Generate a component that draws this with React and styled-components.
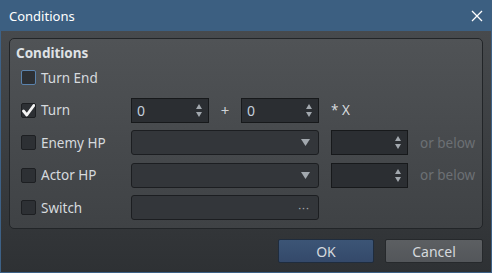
import React from 'react';
import styled, {createGlobalStyle} from 'styled-components';

const Global = createGlobalStyle`
  html, body { margin: 0; padding: 0; background: #2e3134; }
  * { box-sizing: border-box; }
`;

const Window = styled.div`
  width: 492px;
  height: 273px;
  display: flex;
  flex-direction: column;
  border: 1px solid #3d6186;
  border-top: none;
  font-family: "Noto Sans", "Open Sans", sans-serif;
  font-size: 13.5px;
  color: #d6dade;
  background: linear-gradient(#4a4d50, #2e3134);
`;

const TitleBar = styled.div`
  height: 31px;
  margin: 0 -1px;
  background: #3c5f81;
  display: flex;
  align-items: center;
  justify-content: space-between;
  padding: 0 9px 0 9px;
  color: #ffffff;
  font-size: 13px;
`;

const Body = styled.div`
  flex: 1;
  display: flex;
  flex-direction: column;
  padding: 7px 8px 9px 8px;
`;

const Group = styled.div`
  border: 1px solid #222528;
  border-radius: 5px;
  background: linear-gradient(#505356, #3f4245);
  padding: 3px 0 8px 11px;
  height: 191px;
`;

const GroupTitle = styled.div`
  font-weight: bold;
  font-size: 13.5px;
  color: #dfe2e5;
  margin-left: -5px;
  height: 23px;
  line-height: 22px;
`;

const Grid = styled.div`
  display: grid;
  grid-template-columns: 110px 78px 32px 78px 12px 77px auto;
  grid-auto-rows: 25px;
  row-gap: 7.5px;
  align-items: center;
`;

const CheckCell = styled.label`
  display: flex;
  align-items: center;
  gap: 5px;
  grid-column: 1;
`;

const Box = styled.span`
  width: 15px;
  height: 15px;
  border-radius: 2px;
  background: #2d3034;
  border: 1px solid ${p => (p.$focus ? '#5b83ad' : '#1d1f22')};
  display: flex;
  align-items: center;
  justify-content: center;
`;

const Spin = styled.div`
  grid-column: ${p => p.$col};
  height: 25px;
  background: #2b2e32;
  border: 1px solid #17191b;
  display: flex;
  align-items: center;
  justify-content: space-between;
  padding: 0 6px 0 5px;
  color: #c3cfdb;
  font-size: 14px;
`;

const Arrows = styled.div`
  display: flex;
  flex-direction: column;
  gap: 3px;
  align-items: center;
`;

const Combo = styled.div`
  grid-column: 2 / span 3;
  height: 25px;
  background: #33363a;
  border: 1px solid #1c1e21;
  border-radius: 3px;
  display: flex;
  align-items: center;
  justify-content: flex-end;
  padding-right: 8px;
  color: #a9adb2;
`;

const Plus = styled.span`
  grid-column: 3;
  text-align: center;
  font-size: 15px;
  color: #cfd3d7;
`;

const Note = styled.span`
  grid-column: ${p => p.$col};
  padding-left: ${p => p.$pad || 0}px;
  color: ${p => (p.$dim ? '#6c7074' : '#d6dade')};
  white-space: nowrap;
`;

const Footer = styled.div`
  display: flex;
  justify-content: flex-end;
  gap: 11px;
  margin-top: 10px;
`;

const Button = styled.button`
  width: ${p => p.$w}px;
  height: 24px;
  font-family: inherit;
  font-size: 14px;
  border-radius: 2px;
  border: 1px solid ${p => (p.$primary ? '#1f2c3d' : '#26292c')};
  background: ${p => (p.$primary ? 'linear-gradient(#3c5576, #34496a)' : 'linear-gradient(#5c5f62, #53565a)')};
  color: #d5d9dd;
  padding: 0;
`;

const Tri = ({up}) => (
  <svg width="6" height="5" viewBox="0 0 6 5">
    <polygon points={up ? '3,0 6,5 0,5' : '0,0 6,0 3,5'} fill="#a2a8ae" />
  </svg>
);

const SpinArrows = () => (
  <Arrows>
    <Tri up />
    <Tri />
  </Arrows>
);

const Check = ({checked, focus, label}) => (
  <CheckCell>
    <Box $focus={focus}>
      {checked && (
        <svg width="13" height="13" viewBox="0 0 13 13">
          <path d="M1.5 7 L4.8 11 L11.8 1.5" stroke="#f4f4f4" strokeWidth="2.8" fill="none" strokeLinejoin="round" strokeLinecap="round" />
        </svg>
      )}
    </Box>
    {label}
  </CheckCell>
);

const ComboBox = () => (
  <Combo>
    <svg width="9" height="7" viewBox="0 0 9 7">
      <polygon points="0,0 9,0 4.5,7" fill="#a2a8ae" />
    </svg>
  </Combo>
);

export default function App() {
  return (
    <>
      <Global />
      <Window>
        <TitleBar>
          <span>Conditions</span>
          <svg width="12" height="12" viewBox="0 0 12 12">
            <path d="M1 1 L11 11 M11 1 L1 11" stroke="#ffffff" strokeWidth="1.3" />
          </svg>
        </TitleBar>
        <Body>
          <Group>
            <GroupTitle>Conditions</GroupTitle>
            <Grid>
              <Check focus label="Turn End" />
              <span style={{gridColumn: '2 / -1'}} />

              <Check checked label="Turn" />
              <Spin $col={2}>0<SpinArrows /></Spin>
              <Plus>+</Plus>
              <Spin $col={4}>0<SpinArrows /></Spin>
              <Note $col="6 / -1">* X</Note>

              <Check label="Enemy HP" />
              <ComboBox />
              <Spin $col={6}><span /><SpinArrows /></Spin>
              <Note $col={7} $pad={12} $dim>or below</Note>

              <Check label="Actor HP" />
              <ComboBox />
              <Spin $col={6}><span /><SpinArrows /></Spin>
              <Note $col={7} $pad={12} $dim>or below</Note>

              <Check label="Switch" />
              <Combo>
                <span style={{letterSpacing: '1px', fontSize: '11px'}}>···</span>
              </Combo>
            </Grid>
          </Group>
          <Footer>
            <Button $primary $w={96}>OK</Button>
            <Button $w={98}>Cancel</Button>
          </Footer>
        </Body>
      </Window>
    </>
  );
}
